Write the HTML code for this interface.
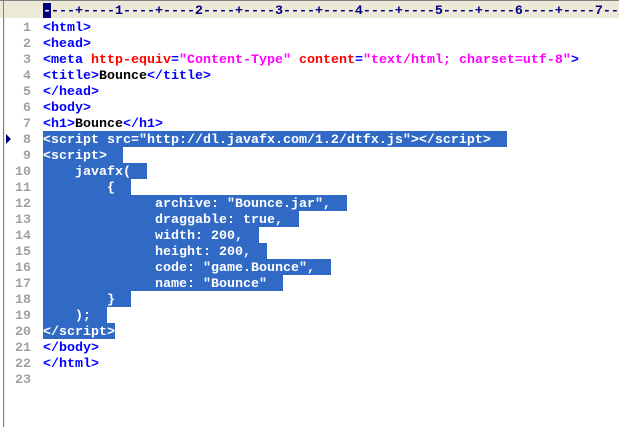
<!DOCTYPE html>
<html><head><meta charset="utf-8"><style>
body{margin:0;width:619px;height:427px;background:#fff;overflow:hidden;position:relative;font-family:"Liberation Mono",monospace;font-size:13.33px;font-weight:bold}
.top{position:absolute;left:0;top:0;width:619px;height:18px;background:#ece9d8;border-top:1px solid #808080;box-sizing:border-box}
.lb{position:absolute;left:3px;top:0;width:1px;height:427px;background:#808080}
.lb2{position:absolute;left:4px;top:19px;width:1px;height:408px;background:#ece9d8}
.ruler{position:absolute;left:43px;top:4px;color:#000080;white-space:pre;line-height:16px}
.cur{position:absolute;left:43px;top:3px;width:8px;height:15px;background:#000080}
.ln{position:absolute;left:0;width:31px;text-align:right;color:#a0a0a0;line-height:16px;margin-top:2px}
.l{position:absolute;left:43px;white-space:pre;line-height:16px;color:#000;margin-top:2px}
.sel{position:absolute;left:43px;height:16px;background:#316ac5}
.t{color:#0000ff}.a{color:#ff0000}.v{color:#ff00ff}.w{color:#fff}
.arrow{position:absolute;left:6px;top:134px;width:0;height:0;border-top:5px solid transparent;border-bottom:5px solid transparent;border-left:5px solid #000080}
</style></head><body>
<div class="top"></div><div class="lb"></div><div class="lb2"></div>
<div class="cur"></div>
<div class="ruler"><span style="color:#fff">-</span>---+----1----+----2----+----3----+----4----+----5----+----6----+----7--</div>
<div class="arrow"></div>
<div class="sel" style="top:131px;width:464px"></div>
<div class="sel" style="top:147px;width:80px"></div>
<div class="sel" style="top:163px;width:104px"></div>
<div class="sel" style="top:179px;width:88px"></div>
<div class="sel" style="top:195px;width:304px"></div>
<div class="sel" style="top:211px;width:256px"></div>
<div class="sel" style="top:227px;width:216px"></div>
<div class="sel" style="top:243px;width:224px"></div>
<div class="sel" style="top:259px;width:288px"></div>
<div class="sel" style="top:275px;width:240px"></div>
<div class="sel" style="top:291px;width:88px"></div>
<div class="sel" style="top:307px;width:64px"></div>
<div class="sel" style="top:323px;width:72px"></div>
<div class="ln" style="top:19px">1</div><div class="ln" style="top:35px">2</div><div class="ln" style="top:51px">3</div><div class="ln" style="top:67px">4</div><div class="ln" style="top:83px">5</div><div class="ln" style="top:99px">6</div><div class="ln" style="top:115px">7</div><div class="ln" style="top:131px">8</div><div class="ln" style="top:147px">9</div><div class="ln" style="top:163px">10</div><div class="ln" style="top:179px">11</div><div class="ln" style="top:195px">12</div><div class="ln" style="top:211px">13</div><div class="ln" style="top:227px">14</div><div class="ln" style="top:243px">15</div><div class="ln" style="top:259px">16</div><div class="ln" style="top:275px">17</div><div class="ln" style="top:291px">18</div><div class="ln" style="top:307px">19</div><div class="ln" style="top:323px">20</div><div class="ln" style="top:339px">21</div><div class="ln" style="top:355px">22</div><div class="ln" style="top:371px">23</div>
<div class="l t" style="top:19px">&lt;html&gt;</div>
<div class="l t" style="top:35px">&lt;head&gt;</div>
<div class="l" style="top:51px"><span class="t">&lt;meta </span><span class="a">http-equiv</span><span class="t">=</span><span class="v">"Content-Type"</span> <span class="a">content</span><span class="t">=</span><span class="v">"text/html; charset=utf-8"</span><span class="t">&gt;</span></div>
<div class="l" style="top:67px"><span class="t">&lt;title&gt;</span>Bounce<span class="t">&lt;/title&gt;</span></div>
<div class="l t" style="top:83px">&lt;/head&gt;</div>
<div class="l t" style="top:99px">&lt;body&gt;</div>
<div class="l" style="top:115px"><span class="t">&lt;h1&gt;</span>Bounce<span class="t">&lt;/h1&gt;</span></div>
<div class="l w" style="top:131px">&lt;script src="http://dl.javafx.com/1.2/dtfx.js"&gt;&lt;/script&gt;</div>
<div class="l w" style="top:147px">&lt;script&gt;</div>
<div class="l w" style="top:163px">    javafx(</div>
<div class="l w" style="top:179px">        {</div>
<div class="l w" style="top:195px">              archive: "Bounce.jar",</div>
<div class="l w" style="top:211px">              draggable: true,</div>
<div class="l w" style="top:227px">              width: 200,</div>
<div class="l w" style="top:243px">              height: 200,</div>
<div class="l w" style="top:259px">              code: "game.Bounce",</div>
<div class="l w" style="top:275px">              name: "Bounce"</div>
<div class="l w" style="top:291px">        }</div>
<div class="l w" style="top:307px">    );</div>
<div class="l w" style="top:323px">&lt;/script&gt;</div>
<div class="l t" style="top:339px">&lt;/body&gt;</div>
<div class="l t" style="top:355px">&lt;/html&gt;</div>
</body></html>
